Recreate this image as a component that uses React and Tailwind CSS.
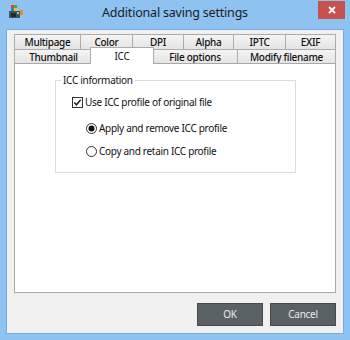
import React from "react";

function AppIcon() {
  return (
    <svg width="15" height="14" viewBox="0 0 15 14">
      <rect x="3" y="0" width="3" height="3" fill="#e8412c" />
      <rect x="6" y="0" width="3" height="3" fill="#3fae49" />
      <rect x="3" y="3" width="3" height="3" fill="#2f7fd6" />
      <rect x="6" y="3" width="3" height="3" fill="#f5c21b" />
      <rect x="1" y="6" width="11" height="7" fill="#3f5558" />
      <rect x="3" y="8" width="5" height="4" fill="#1d2b2d" />
      <rect x="9" y="7" width="2" height="2" fill="#8fd0c0" />
      <rect x="12" y="5" width="3" height="5" fill="#e88a2a" />
    </svg>
  );
}

function Tab({ w, children, last }) {
  return (
    <div
      className={`h-full flex items-center justify-center border-l border-t border-[#acacac] bg-gradient-to-b from-[#f4f4f4] to-[#e4e4e4] font-medium text-[#111] ${last ? "border-r flex-1" : ""}`}
      style={last ? undefined : { width: w }}
    >
      {children}
    </div>
  );
}

export default function App() {
  return (
    <div
      className="w-[350px] h-[340px] bg-[#8ec2f1] flex flex-col text-[10px] tracking-[-0.3px] text-[#111]"
      style={{ fontFamily: '"Noto Sans", "Segoe UI", sans-serif' }}
    >
      <div className="h-[29px] grid grid-cols-[1fr_auto_1fr] items-start">
        <div className="pl-[8px] pt-[5px]">
          <AppIcon />
        </div>
        <div className="pt-[4px] text-[12.5px] tracking-[-0.2px] leading-[18px] text-[#1c1c1c]">
          Additional saving settings
        </div>
        <div className="flex justify-end pr-[5px] pt-[1px]">
          <div className="w-[27px] h-[18px] bg-[#c75050] flex items-center justify-center">
            <svg width="8" height="8" viewBox="0 0 8 8">
              <path d="M1 1 L7 7 M7 1 L1 7" stroke="#fff" strokeWidth="1.8" />
            </svg>
          </div>
        </div>
      </div>
      <div className="mx-[6px] mb-[6px] flex-1 border border-[#79acdc] bg-[#f0f0f0] flex flex-col px-[7px] pt-[4px] pb-[7px]">
        <div className="flex h-[15px] leading-none">
          <Tab w="66px">Multipage</Tab>
          <Tab w="52px">Color</Tab>
          <Tab w="51px">DPI</Tab>
          <Tab w="50px">Alpha</Tab>
          <Tab w="52px">IPTC</Tab>
          <Tab last>EXIF</Tab>
        </div>
        <div className="flex items-start h-[14px] leading-none">
          <div className="w-[78px] h-[14px]">
            <Tab w="78px">Thumbnail</Tab>
          </div>
          <div className="relative z-10 w-[64px] h-[17px] -mx-[2px] -mt-[2px] -mb-[1px] bg-white border-l border-t border-r border-[#acacac] flex items-center justify-center text-[#111]">
            ICC
          </div>
          <div className="w-[85px] h-[14px]">
            <Tab w="85px">File options</Tab>
          </div>
          <div className="flex-1 h-[14px] flex">
            <Tab last>Modify filename</Tab>
          </div>
        </div>
        <div className="flex-1 bg-white border border-[#a9a9a9] pl-[40px] pt-[9px]">
          <fieldset className="w-[241px] h-[100px] border border-[#dcdcdc]">
            <legend className="ml-[5px] px-[2px] leading-[14px] text-[#111]">ICC information</legend>
            <div className="flex flex-col">
              <div className="h-[14px] mt-[8px] pl-[16px] flex items-center gap-[2px]">
                <svg width="11" height="11" viewBox="0 0 11 11">
                  <rect x="0.5" y="0.5" width="10" height="10" fill="#fff" stroke="#333" />
                  <path d="M2.3 5.6 L4.4 7.8 L8.7 2.8" fill="none" stroke="#1b2433" strokeWidth="1.5" />
                </svg>
                <span>Use ICC profile of original file</span>
              </div>
              <div className="h-[14px] mt-[12px] pl-[30px] flex items-center gap-[2px]">
                <svg width="11" height="11" viewBox="0 0 11 11">
                  <circle cx="5.5" cy="5.5" r="5" fill="#fff" stroke="#333" />
                  <circle cx="5.5" cy="5.5" r="3" fill="#111" />
                </svg>
                <span>Apply and remove ICC profile</span>
              </div>
              <div className="h-[14px] mt-[9px] pl-[30px] flex items-center gap-[2px]">
                <svg width="11" height="11" viewBox="0 0 11 11">
                  <circle cx="5.5" cy="5.5" r="5" fill="#fff" stroke="#333" />
                </svg>
                <span>Copy and retain ICC profile</span>
              </div>
            </div>
          </fieldset>
        </div>
        <div className="mt-[10px] flex justify-end gap-[7px]">
          <div className="w-[66px] h-[23px] bg-[#5a6165] border border-[#454b4f] flex items-center justify-center text-[#e9ebec]">
            OK
          </div>
          <div className="w-[66px] h-[23px] bg-[#5a6165] border border-[#454b4f] flex items-center justify-center text-[#e9ebec]">
            Cancel
          </div>
        </div>
      </div>
    </div>
  );
}
